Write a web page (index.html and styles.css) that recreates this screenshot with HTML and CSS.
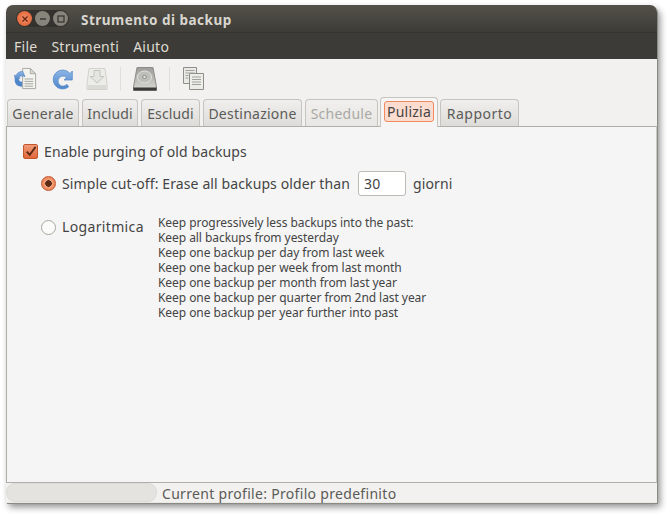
FILE: index.html
```html
<!DOCTYPE html>
<html lang="it">
<head>
<meta charset="utf-8">
<title>Strumento di backup</title>
<link rel="stylesheet" href="styles.css">
</head>
<body>
<div class="window">
  <header class="titlebar">
    <div class="controls">
      <span class="ctl close"><svg width="8" height="8" viewBox="0 0 8 8"><path d="M1.5 1.500l5 5M6.500 1.500l-5 5" stroke="#6b2410" stroke-width="1.200"/></svg></span>
      <span class="ctl"><svg width="8" height="8" viewBox="0 0 8 8"><path d="M1 4h6" stroke="#35342f" stroke-width="1.400"/></svg></span>
      <span class="ctl"><svg width="8" height="8" viewBox="0 0 8 8"><rect x="1" y="1" width="6" height="6" fill="none" stroke="#35342f" stroke-width="1.200"/></svg></span>
    </div>
    <div class="title">Strumento di backup</div>
  </header>
  <nav class="menubar">
    <span>File</span><span>Strumenti</span><span>Aiuto</span>
  </nav>
  <div class="toolbar">
    <svg class="tool first" width="23" height="23" viewBox="0 0 24 24">
      <defs>
        <linearGradient id="blue" x1="0" y1="0" x2="0" y2="1"><stop offset="0" stop-color="#8db6e6"/><stop offset="1" stop-color="#4f86c9"/></linearGradient>
        <linearGradient id="diskg" x1="0" y1="0" x2="0" y2="1"><stop offset="0" stop-color="#9d9d9a"/><stop offset="1" stop-color="#d9d9d6"/></linearGradient>
      </defs>
      <path d="M9 1.500h8l5.500 5.500v15.500H9z" fill="#f3f3f0" stroke="#a9a9a3"/>
      <path d="M17 1.500V7h5.500z" fill="#d9d9d4" stroke="#a9a9a3"/>
      <path d="M11 12.500h9M11 15h9M11 17.500h9M11 20h9" stroke="#a3a39e"/>
      <path d="M9 4.500c-4 .2-6 2-6.800 4.500L.5 8.500l1 5.500 5-2.500-1.800-.6C5.200 9.800 7 9 9.500 9.500l2 .5z" fill="url(#blue)" stroke="#4a80c2" stroke-width=".6"/>
      <path d="M.8 13c-.3 4 2 7.500 7.700 7.500v-5C6 15.500 5 14 4.800 12z" fill="#4f86c9"/>
    </svg>
    <svg class="tool second" width="22" height="24" viewBox="0 0 22 24">
      <path d="M17.500 20a9.500 9.500 0 1 1 1.500-13.500L21.300 4v9h-8.300l2.500-2.500a5 5 0 1 0 .4 6.800c.5.600 1.500 2 1.600 2.700z" fill="url(#blue)" stroke="#5d8fcc" stroke-width=".8"/>
    </svg>
    <svg class="tool third" width="24" height="24" viewBox="0 0 24 24">
      <path d="M4 1.500h16l2 15.500v5.500H2V17z" fill="#ecece9" stroke="#d2d2cd"/>
      <path d="M9 3.500h6v6h4l-7 6.500-7-6.500h4z" fill="#e4e4e0" stroke="#c4c4bf"/>
      <path d="M2.500 18h19v4h-19z" fill="#dadad6"/>
    </svg>
    <span class="sep"></span>
    <svg class="tool disk" width="24" height="24" viewBox="0 0 24 24">
      <path d="M4 .5h16l3.500 19.500v3.500H.5V20z" fill="url(#diskg)" stroke="#8c8c86"/>
      <ellipse cx="11.500" cy="10" rx="7" ry="6" fill="#bdbdba" stroke="#e2e2df"/>
      <ellipse cx="11.500" cy="10" rx="2" ry="1.500" fill="#dededb" stroke="#8f8f8d"/>
      <path d="M.5 20.500h23v3h-23z" fill="#3b3b38"/>
    </svg>
    <span class="sep sep2"></span>
    <svg class="tool copy" width="21" height="23" viewBox="0 0 21 23">
      <path d="M.5.5h13v16H.5z" fill="#e9e9e6" stroke="#8f8f8a"/>
      <path d="M6.500 6.500h14v16h-14z" fill="#ecece9" stroke="#8f8f8a"/>
      <path d="M2.500 3.500h9M2.500 6h9M2.500 8.500h3M2.500 11h3M9 10h9M9 12.500h9M9 15h9M9 17.500h9" stroke="#a2a29d"/>
    </svg>
  </div>
  <div class="tabs">
    <span class="tab t1">Generale</span>
    <span class="tab t2">Includi</span>
    <span class="tab t3">Escludi</span>
    <span class="tab t4">Destinazione</span>
    <span class="tab t5 disabled">Schedule</span>
    <span class="tab active"><span class="focus">Pulizia</span></span>
    <span class="tab t7">Rapporto</span>
  </div>
  <main class="content">
    <label class="row enable">
      <span class="check"><svg width="14" height="14" viewBox="0 0 14 14"><path d="M3 6.500l3.200 3.500L12.500 1.500" fill="none" stroke="#5b2a14" stroke-width="2"/></svg></span>
      <span>Enable purging of old backups</span>
    </label>
    <div class="row simple">
      <span class="radio on"></span>
      <span>Simple cut-off: Erase all backups older than</span>
      <span class="spin">30</span>
      <span>giorni</span>
    </div>
    <div class="row log">
      <span class="radio"></span>
      <span class="loglabel">Logaritmica</span>
      <div class="notes">
        <div>Keep progressively less backups into the past:</div>
        <div>Keep all backups from yesterday</div>
        <div>Keep one backup per day from last week</div>
        <div>Keep one backup per week from last month</div>
        <div>Keep one backup per month from last year</div>
        <div>Keep one backup per quarter from 2nd last year</div>
        <div>Keep one backup per year further into past</div>
      </div>
    </div>
  </main>
  <footer class="statusbar">
    <span class="progress"></span>
    <span class="status">Current profile: Profilo predefinito</span>
  </footer>
</div>
</body>
</html>
```
FILE: styles.css
```css
html, body { margin: 0; padding: 0; background: #fff; }
body { width: 667px; height: 514px; overflow: hidden; font-family: "Noto Sans", "Open Sans", sans-serif; font-size: 14px; color: #444; }
.window { position: relative; margin: 5px 0 0 6px; width: 651px; height: 498px; display: flex; flex-direction: column; background: #f2f1ef; border-radius: 7px 7px 0 0; box-shadow: 1px 1px 0 #8a8a85, 3px 4px 7px rgba(0,0,0,.45); }
.titlebar { height: 28px; flex: none; display: flex; align-items: center; background: linear-gradient(#54514a, #3d3c37); border-radius: 7px 7px 0 0; border-bottom: 1px solid #34332f; box-sizing: border-box; }
.controls { display: flex; gap: 3px; margin-left: 10px; padding: 1px; border-radius: 10px; background: #33322e; }
.ctl { width: 15px; height: 15px; border-radius: 50%; background: #86847b; display: flex; align-items: center; justify-content: center; }
.ctl.close { background: radial-gradient(#f0926a, #e0572a); }
.title { margin: 2px 0 0 12px; font-weight: 700; font-size: 13.500px; letter-spacing: .5px; color: #d8d6cf; }
.menubar { height: 26px; flex: none; display: flex; align-items: center; gap: 14px; padding-left: 8px; background: #3c3b37; color: #dfdbd2; font-size: 14px; letter-spacing: .25px; }
.toolbar { height: 39px; flex: none; display: flex; align-items: center; background: #f2f1ef; }
.tool { flex: none; display: block; }
.first { margin-left: 8px; }
.second { margin-left: 14px; }
.third { margin-left: 12px; }
.sep { width: 1px; height: 24px; margin: 0 12px 0 11px; background: #dfdedb; }
.sep2 { margin: 0 13px 0 12px; }
.tabs { height: 28px; flex: none; display: flex; align-items: flex-end; gap: 3px; padding-left: 1px; position: relative; z-index: 1; letter-spacing: .25px; }
.tab { box-sizing: border-box; height: 27px; display: flex; align-items: center; justify-content: center; border: 1px solid #c6c4bf; border-bottom: 0; border-radius: 4px 4px 0 0; background: linear-gradient(#f0efed, #dedcd9); color: #5b5b58; }
.t1 { width: 72px; } .t2 { width: 56px; letter-spacing: .1px; } .t3 { width: 59px; letter-spacing: .15px; } .t4 { width: 99px; } .t5 { width: 73px; } .t7 { width: 79px; margin-left: -1px; letter-spacing: .5px; }
.disabled { color: #a9a8a4; background: linear-gradient(#f0efed, #e8e7e4); }
.active { width: 58px; height: 30px; margin: 0 0 -1px -1px; background: #f5f5f5; border-color: #c6c4bf; padding-bottom: 2px; }
.focus { display: block; padding: 0 2px; height: 21px; line-height: 20px; box-sizing: border-box; border: 1px solid #f08a5f; border-radius: 3px; background: #fbdccf; color: #444; }
.content { flex: 1; min-height: 0; box-sizing: border-box; background: #f5f5f5; border: 1px solid #b0aea8; border-right-color: #c9c7c2; padding: 15px 0 0 16px; }
.row { display: flex; align-items: center; }
.enable { letter-spacing: .1px; }
.check { box-sizing: border-box; width: 15px; height: 15px; border: 1px solid #c5562c; border-radius: 2px; background: linear-gradient(#f09a78, #e0683a); display: flex; align-items: center; justify-content: center; margin-right: 6px; }
.simple { margin: 10px 0 0 18px; height: 24px; letter-spacing: .11px; }
.radio { box-sizing: border-box; flex: none; width: 15px; height: 15px; border-radius: 50%; border: 1px solid #a9a79f; background: #fbfbfa; margin-right: 6px; position: relative; }
.radio.on { border-color: #c5562c; background: radial-gradient(#5b2a14 0 3px, #f4a27f 3.500px, #e0683a); }
.spin { box-sizing: border-box; width: 48px; height: 25px; margin: 0 7px 0 8px; padding-left: 5px; line-height: 23px; border: 1px solid #bdbbb6; border-radius: 3px; background: #fff; }
.log { margin: 22px 0 0 18px; align-items: flex-start; }
.loglabel { width: 96px; flex: none; line-height: 20px; letter-spacing: .35px; }
.log .radio { margin-top: 3px; }
.notes { font-size: 12px; line-height: 15px; margin-top: -2px; letter-spacing: -.06px; }
.statusbar { height: 20px; flex: none; display: flex; align-items: center; background: #f2f1ef; border-bottom: 1px solid #e9e8e5; box-sizing: border-box; }
.progress { width: 151px; height: 19px; box-sizing: border-box; border: 1px solid #dddbd7; border-radius: 9px; background: #e4e3e0; }
.status { margin-left: 5px; margin-top: 2px; color: #5b5b58; letter-spacing: .31px; }
```
